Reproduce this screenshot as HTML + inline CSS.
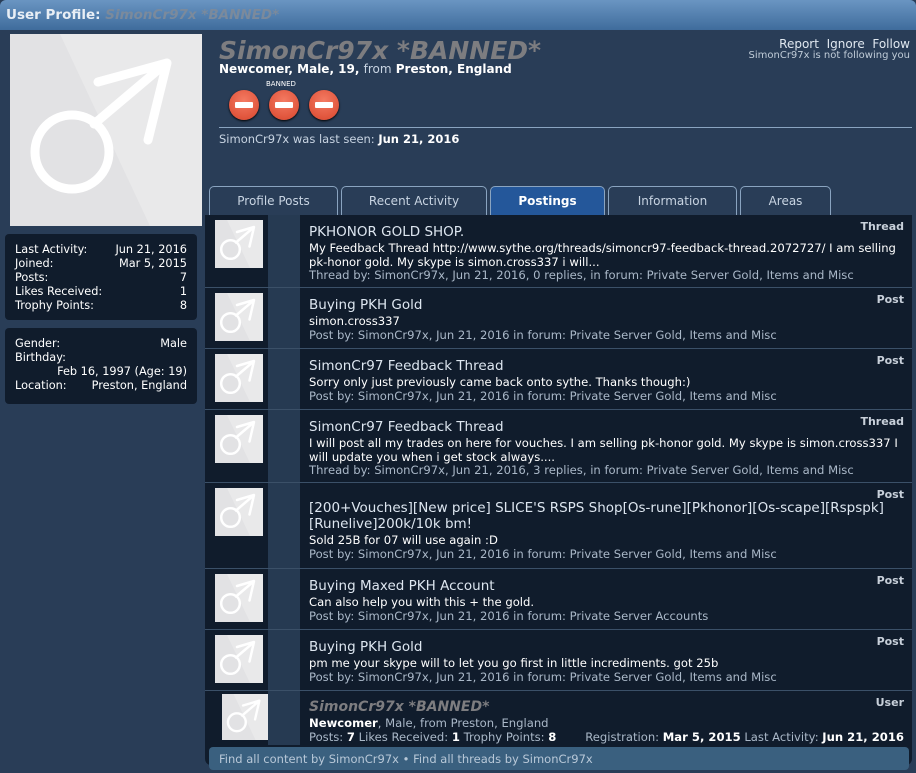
<!DOCTYPE html><html><head><style>
*{margin:0;padding:0;box-sizing:border-box}
body{width:916px;height:773px;background:#293d57;font-family:"DejaVu Sans","Liberation Sans",sans-serif;font-size:11px;color:#fff;position:relative;overflow:hidden}
.hdr{position:absolute;left:0;top:0;width:916px;height:30px;background:linear-gradient(#6a95c2,#3f6c9c);border-radius:6px 6px 0 0}
.hdr span{position:absolute;left:6px;top:7px;font-weight:bold;font-size:13.5px;color:#e8eef5}
.hdr i{color:#7b8a9c;font-weight:bold}
.av{position:absolute;left:10px;top:34px;width:192px;height:192px;background:#e2e2e4;overflow:hidden}
.box{position:absolute;left:5px;background:#101c2c;border-radius:4px;padding:9px 10px;line-height:14px;font-size:11.3px}
.box div{display:flex;justify-content:space-between}
.a{position:absolute}
.tab{position:absolute;top:186px;height:30px;border:1px solid #8aa4c0;border-bottom:none;border-radius:5px 5px 0 0;background:#293d57;color:#c8d4e2;font-size:12px;text-align:center;line-height:28px}
.list{position:absolute;left:205px;top:215px;width:707px;height:550px;background:#101c2c;border-radius:0 0 6px 6px}
.mid{position:absolute;left:63px;top:0;width:32px;height:530px;background:#263a52}
.row{position:absolute;left:0;width:707px;border-top:1px solid #3b5068}
.th{position:absolute;left:10px;width:48px;height:48px;background:#e2e2e4;overflow:hidden}
.ct{position:absolute;left:104px;right:8px;line-height:13.5px;font-size:11.6px}
.t{font-size:13.5px;color:#dde6f0;margin-bottom:2px;line-height:16px}
.s{color:#fff}
.m{color:#aab8c8}
.ty{position:absolute;right:8px;font-weight:bold;color:#c8d0da;font-size:11px}
.ban{position:absolute;top:90px;width:30px;height:30px;border-radius:50%;background:radial-gradient(circle at 50% 35%,#f47a62,#d8452c);box-shadow:0 1px 2px #000}
.ban:after{content:"";position:absolute;left:6px;top:12px;width:18px;height:6px;background:#fff;border-radius:1px}
</style></head><body>
<div class="hdr"><span>User Profile: <i>SimonCr97x *BANNED*</i></span></div>
<div class="av"><svg width="192" height="192" viewBox="0 0 192 192"><polygon points="50,0 192,0 192,192 140,192" fill="#e9e9ea"/><g fill="none" stroke="#fff" stroke-width="9" stroke-linecap="round" stroke-linejoin="round"><circle cx="62" cy="118" r="37"/><path d="M84 90 L155 30 M88 48 L157 29 L138 106"/></g></svg></div>
<div class="box" style="top:234px;width:192px;height:86px">
<div><span>Last Activity:</span><span>Jun 21, 2016</span></div><div><span>Joined:</span><span>Mar 5, 2015</span></div><div><span>Posts:</span><span>7</span></div><div><span>Likes Received:</span><span>1</span></div><div><span>Trophy Points:</span><span>8</span></div></div>
<div class="box" style="top:328px;width:192px;height:76px">
<div><span>Gender:</span><span>Male</span></div><div><span>Birthday:</span><span></span></div><div><span></span><span>Feb 16, 1997 (Age: 19)</span></div><div><span>Location:</span><span>Preston, England</span></div></div>
<div class="a" style="left:219px;top:36px;font-size:25px;font-weight:bold;font-style:italic;color:#7d7d80">SimonCr97x *BANNED*</div>
<div class="a" style="left:219px;top:62px;font-size:12px;font-weight:bold">Newcomer, Male, 19, <span style="font-weight:normal;color:#c8d4e2">from</span> Preston, England</div>
<div class="a" style="left:266px;top:80px;font-size:7px;color:#fff">BANNED</div>
<div class="ban" style="left:229px"></div><div class="ban" style="left:269px"></div><div class="ban" style="left:309px"></div>
<div class="a" style="left:219px;top:127px;width:693px;border-top:1px solid #8aa4c0"></div>
<div class="a" style="left:219px;top:132px;color:#c8d4e2;font-size:11.5px">SimonCr97x was last seen: <b style="color:#fff">Jun 21, 2016</b></div>
<div class="a" style="right:6px;top:38px;text-align:right;line-height:12px"><div style="font-size:12px;color:#e0e8f0">Report&nbsp;&nbsp;Ignore&nbsp;&nbsp;Follow</div><div style="font-size:10px;color:#c0ccd8">SimonCr97x is not following you</div></div>
<div class="tab" style="left:209px;width:129px">Profile Posts</div>
<div class="tab" style="left:341px;width:146px">Recent Activity</div>
<div class="tab" style="left:490px;width:115px;background:#24579a;color:#fff;font-weight:bold">Postings</div>
<div class="tab" style="left:608px;width:129px">Information</div>
<div class="tab" style="left:740px;width:91px">Areas</div>
<div class="list"><div class="mid"></div>
<div class="row" style="top:0;border:none"><div class="th" style="top:5px"></div><div class="ty" style="top:5px">Thread</div><div class="ct" style="top:9px"><div class="t">PKHONOR GOLD SHOP.</div><div class="s">My Feedback Thread http://www.sythe.org/threads/simoncr97-feedback-thread.2072727/ I am selling pk-honor gold. My skype is simon.cross337 i will...</div><div class="m">Thread by: SimonCr97x, Jun 21, 2016, 0 replies, in forum: Private Server Gold, Items and Misc</div></div></div>
<div class="row" style="top:72px"><div class="th" style="top:5px"></div><div class="ty" style="top:5px">Post</div><div class="ct" style="top:9px"><div class="t">Buying PKH Gold</div><div class="s">simon.cross337</div><div class="m">Post by: SimonCr97x, Jun 21, 2016 in forum: Private Server Gold, Items and Misc</div></div></div>
<div class="row" style="top:133px"><div class="th" style="top:5px"></div><div class="ty" style="top:5px">Post</div><div class="ct" style="top:9px"><div class="t">SimonCr97 Feedback Thread</div><div class="s">Sorry only just previously came back onto sythe. Thanks though:)</div><div class="m">Post by: SimonCr97x, Jun 21, 2016 in forum: Private Server Gold, Items and Misc</div></div></div>
<div class="row" style="top:194px"><div class="th" style="top:5px"></div><div class="ty" style="top:5px">Thread</div><div class="ct" style="top:9px"><div class="t">SimonCr97 Feedback Thread</div><div class="s">I will post all my trades on here for vouches. I am selling pk-honor gold. My skype is simon.cross337 I will update you when i get stock always....</div><div class="m">Thread by: SimonCr97x, Jun 21, 2016, 3 replies, in forum: Private Server Gold, Items and Misc</div></div></div>
<div class="row" style="top:267px"><div class="th" style="top:5px"></div><div class="ty" style="top:5px">Post</div><div class="ct" style="top:17px"><div class="t">[200+Vouches][New price] SLICE'S RSPS Shop[Os-rune][Pkhonor][Os-scape][Rspspk][Runelive]200k/10k bm!</div><div class="s">Sold 25B for 07 will use again :D</div><div class="m">Post by: SimonCr97x, Jun 21, 2016 in forum: Private Server Gold, Items and Misc</div></div></div>
<div class="row" style="top:353px"><div class="th" style="top:5px"></div><div class="ty" style="top:5px">Post</div><div class="ct" style="top:9px"><div class="t">Buying Maxed PKH Account</div><div class="s">Can also help you with this + the gold.</div><div class="m">Post by: SimonCr97x, Jun 21, 2016 in forum: Private Server Accounts</div></div></div>
<div class="row" style="top:414px"><div class="th" style="top:5px"></div><div class="ty" style="top:5px">Post</div><div class="ct" style="top:9px"><div class="t">Buying PKH Gold</div><div class="s">pm me your skype will to let you go first in little incrediments. got 25b</div><div class="m">Post by: SimonCr97x, Jun 21, 2016 in forum: Private Server Gold, Items and Misc</div></div></div>
<div class="row" style="top:475px"><div class="th" style="top:3px;left:17px;width:46px;height:46px"></div><div class="ty" style="top:5px">User</div><div class="ct" style="top:8px"><div class="t" style="font-style:italic;font-weight:bold;color:#7d7d80;font-size:14px">SimonCr97x *BANNED*</div><div class="m" style="margin-top:1px"><b style="color:#fff">Newcomer</b>, Male, from Preston, England</div><div class="m">Posts: <b style="color:#fff">7</b> Likes Received: <b style="color:#fff">1</b> Trophy Points: <b style="color:#fff">8</b><span style="float:right">Registration: <b style="color:#fff">Mar 5, 2015</b> Last Activity: <b style="color:#fff">Jun 21, 2016</b></span></div></div></div>
</div>
<div class="a" style="left:209px;top:747px;width:700px;height:23px;background:#3a607f;border-radius:4px;color:#b8c8d8;padding:5px 10px;font-size:11.5px">Find all content by SimonCr97x • Find all threads by SimonCr97x</div>
<script>
document.querySelectorAll('.th').forEach(function(e){e.innerHTML='<svg width="100%" height="100%" viewBox="0 0 48 48"><polygon points="12,0 48,0 48,48 35,48" fill="#e9e9ea"/><g fill="none" stroke="#fff" stroke-width="2.5" stroke-linecap="round" stroke-linejoin="round"><circle cx="15.5" cy="29.5" r="9.3"/><path d="M21 22.5 L38.5 7.5 M22 12 L39 7 L34.5 26.5"/></g></svg>'});
</script>
</body></html>
